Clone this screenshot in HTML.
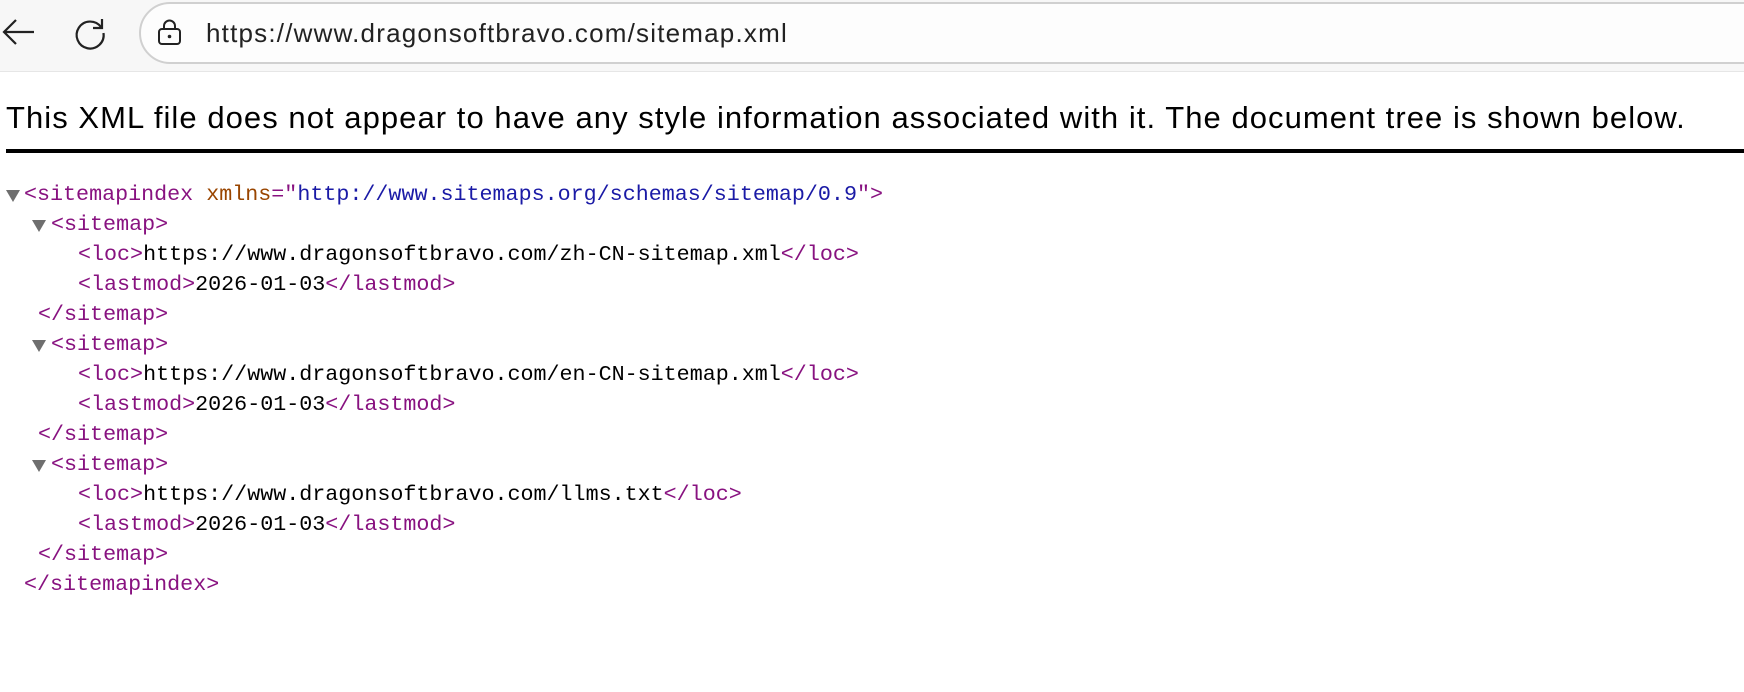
<!DOCTYPE html>
<html><head><meta charset="utf-8"><style>
*{margin:0;padding:0;box-sizing:border-box}
body{width:1744px;height:692px;background:#fff;position:relative;overflow:hidden;font-family:"Liberation Sans",sans-serif}
.bar{position:absolute;left:0;top:0;width:1744px;height:72px;background:#f7f7f7;border-bottom:1px solid #e6e6e6}
.addr{position:absolute;left:139px;top:2px;width:1640px;height:62px;border:2px solid #d0d0d0;border-radius:31px;background:#fdfdfd}
.url{position:absolute;left:206px;top:18px;font-size:26px;color:#222;letter-spacing:1.2px}
h1{position:absolute;left:6px;top:100px;font-size:31px;font-weight:normal;color:#000;white-space:nowrap;letter-spacing:1.05px}
.rule{position:absolute;left:6px;top:149px;width:1738px;height:4px;background:#000}
.l{position:absolute;font-family:"Liberation Mono",monospace;font-size:21.7px;line-height:30px;white-space:pre;color:#000}
.t{color:#881280}.an{color:#994500}.av{color:#1a1aa6}
.tri{position:absolute;width:0;height:0;border-left:7px solid transparent;border-right:7px solid transparent;border-top:12px solid #6e6e6e}
</style></head><body>
<div class="bar"></div>
<svg style="position:absolute;left:0;top:14px" width="40" height="40" viewBox="0 0 40 40"><path d="M34 18H4M16 6L4 18L16 30" fill="none" stroke="#222" stroke-width="2.2"/></svg>
<svg style="position:absolute;left:72px;top:15px" width="36" height="36" viewBox="0 0 36 36"><path d="M29 12A13.5 13.5 0 1 0 31.5 18" fill="none" stroke="#222" stroke-width="2.2"/><path d="M30 4V13H21" fill="none" stroke="#222" stroke-width="2.2"/></svg>
<div class="addr"></div>
<svg style="position:absolute;left:156px;top:18px" width="28" height="28" viewBox="0 0 28 28"><rect x="3" y="11" width="21" height="15" rx="3" fill="none" stroke="#222" stroke-width="2"/><path d="M8 11V8a5.5 5.5 0 0 1 11 0v3" fill="none" stroke="#222" stroke-width="2"/><circle cx="13.5" cy="18.5" r="1.8" fill="#222"/></svg>
<div class="url">https://www.dragonsoftbravo.com/sitemap.xml</div>
<h1>This XML file does not appear to have any style information associated with it. The document tree is shown below.</h1>
<div class="rule"></div>
<div class="tri" style="left:6px;top:190px"></div>
<div class="l" style="left:24px;top:180px"><span class="t">&lt;sitemapindex </span><span class="an">xmlns</span><span class="t">="</span><span class="av">http://www.sitemaps.org/schemas/sitemap/0.9</span><span class="t">"&gt;</span></div>
<div class="tri" style="left:32px;top:220px"></div>
<div class="l t" style="left:51px;top:210px">&lt;sitemap&gt;</div>
<div class="l" style="left:78px;top:240px"><span class="t">&lt;loc&gt;</span>https://www.dragonsoftbravo.com/zh-CN-sitemap.xml<span class="t">&lt;/loc&gt;</span></div>
<div class="l" style="left:78px;top:270px"><span class="t">&lt;lastmod&gt;</span>2026-01-03<span class="t">&lt;/lastmod&gt;</span></div>
<div class="l t" style="left:38px;top:300px">&lt;/sitemap&gt;</div>
<div class="tri" style="left:32px;top:340px"></div>
<div class="l t" style="left:51px;top:330px">&lt;sitemap&gt;</div>
<div class="l" style="left:78px;top:360px"><span class="t">&lt;loc&gt;</span>https://www.dragonsoftbravo.com/en-CN-sitemap.xml<span class="t">&lt;/loc&gt;</span></div>
<div class="l" style="left:78px;top:390px"><span class="t">&lt;lastmod&gt;</span>2026-01-03<span class="t">&lt;/lastmod&gt;</span></div>
<div class="l t" style="left:38px;top:420px">&lt;/sitemap&gt;</div>
<div class="tri" style="left:32px;top:460px"></div>
<div class="l t" style="left:51px;top:450px">&lt;sitemap&gt;</div>
<div class="l" style="left:78px;top:480px"><span class="t">&lt;loc&gt;</span>https://www.dragonsoftbravo.com/llms.txt<span class="t">&lt;/loc&gt;</span></div>
<div class="l" style="left:78px;top:510px"><span class="t">&lt;lastmod&gt;</span>2026-01-03<span class="t">&lt;/lastmod&gt;</span></div>
<div class="l t" style="left:38px;top:540px">&lt;/sitemap&gt;</div>
<div class="l t" style="left:24px;top:570px">&lt;/sitemapindex&gt;</div>
</body></html>
